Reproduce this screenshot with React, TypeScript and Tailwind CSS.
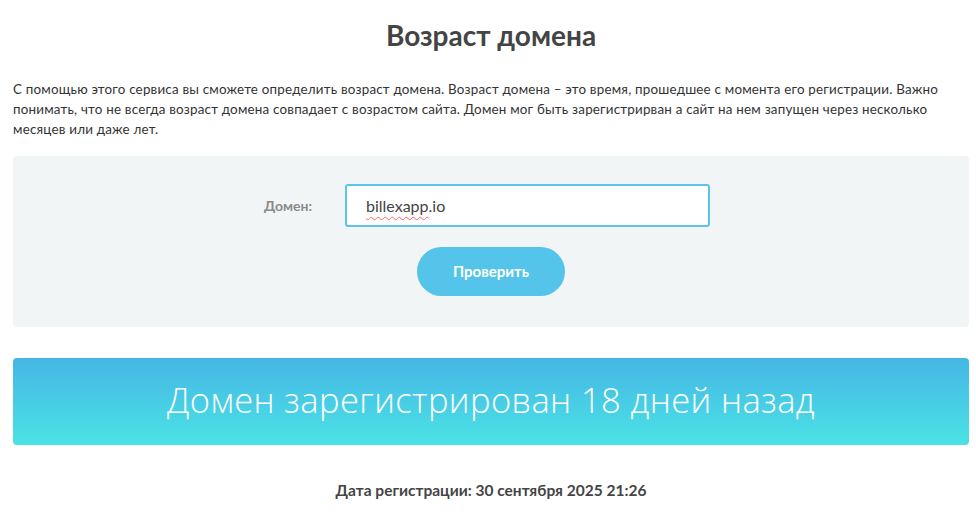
import React from "react";

export default function App() {
  return (
    <div className="w-[976px] h-[532px] bg-white overflow-hidden pl-[13px] pr-[7px] text-[#333]" style={{ fontFamily: "Lato, 'Open Sans', sans-serif" }}>
      <h1 className="pt-[18px] text-center text-[28px] leading-[34px] font-bold text-[#444]">Возраст домена</h1>
      <p className="mt-[27px] text-[13.4px] leading-[20px] tracking-[0.2px] text-[#333]">
        С помощью этого сервиса вы сможете определить возраст домена. Возраст домена – это время, прошедшее с момента его регистрации. Важно понимать, что не всегда возраст домена совпадает с возрастом сайта. Домен мог быть зарегистрирван а сайт на нем запущен через несколько месяцев или даже лет.
      </p>
      <div className="mt-[17px] h-[171px] rounded-[4px] bg-[#f2f5f6] flex flex-col items-center pt-[28px]">
        <div className="flex items-center mr-[8px]">
          <label className="w-[81px] text-[14px] font-bold text-[#8a8a8a]">Домен:</label>
          <div className="w-[365px] h-[43px] rounded-[3px] border-2 border-[#5bc3ec] bg-white flex items-center pl-[19px]">
            <span className="text-[16px] text-[#444] underline decoration-wavy decoration-red-400 decoration-1 underline-offset-4" style={{ textDecorationSkipInk: "none" }}>billexapp</span>
            <span className="text-[16px] text-[#444]">.io</span>
          </div>
        </div>
        <button className="mt-[20px] w-[148px] h-[49px] rounded-full bg-[#55c4eb] text-white text-[15px] font-bold">Проверить</button>
      </div>
      <div className="mt-[31px] h-[87px] rounded-[4px] bg-gradient-to-b from-[#46b6e4] to-[#4ae3e6] flex items-center justify-center pb-[3px]">
        <span className="text-white text-[34.5px] font-light tracking-[0.4px]" style={{ fontFamily: "'Open Sans', sans-serif" }}>Домен зарегистрирован 18 дней назад</span>
      </div>
      <p className="mt-[34px] text-center text-[15.5px] font-bold text-[#444]">Дата регистрации: 30 сентября 2025 21:26</p>
    </div>
  );
}
